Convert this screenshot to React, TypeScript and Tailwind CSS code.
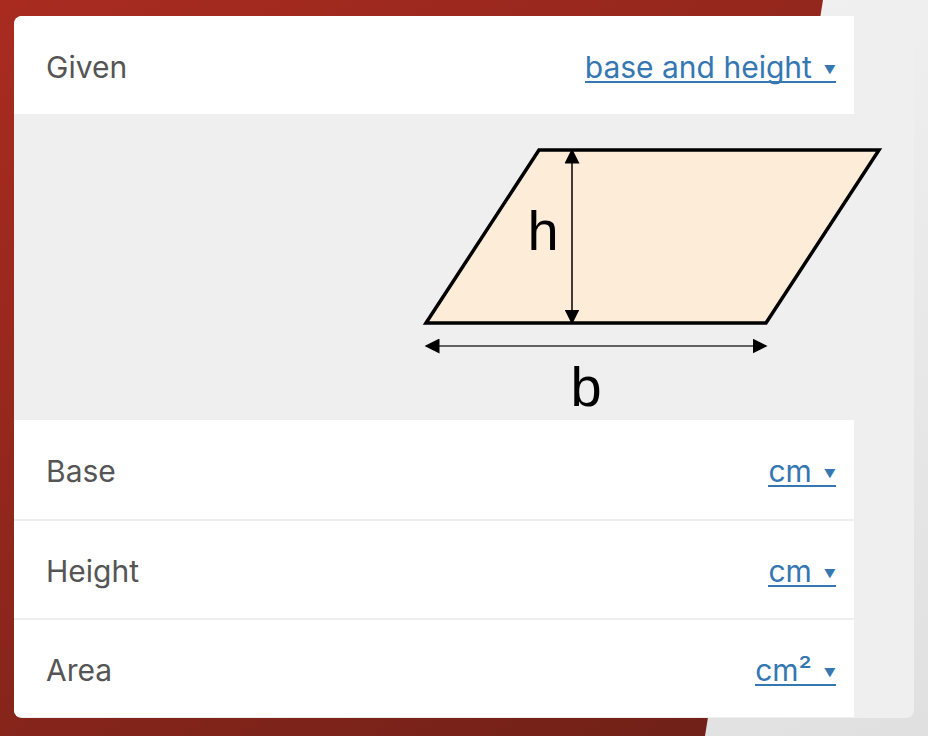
import React from "react";

const ROWS = [
  { label: "Base", unit: "cm" },
  { label: "Height", unit: "cm" },
  { label: "Area", unit: "cm²" },
];

function UnitLink({ children }: { children: React.ReactNode }) {
  // underline drawn as a background strip so it runs under the caret too
  return (
    <a
      href="#"
      className="bg-[linear-gradient(#3577b1,#3577b1)] bg-[length:100%_2px] bg-[position:0_calc(100%-7px)] bg-no-repeat text-[#3577b1] no-underline"
    >
      {children}
      <span className="ml-[12px] align-[4px] text-[12px]">▼</span>
    </a>
  );
}

function Parallelogram() {
  return (
    <svg width="900" height="306" viewBox="0 0 900 306" className="block">
      <defs>
        <marker id="ah" viewBox="0 0 10 10" refX="9" refY="5" markerWidth="15" markerHeight="15" markerUnits="userSpaceOnUse" orient="auto-start-reverse">
          <path d="M0 0 L10 5 L0 10 Z" fill="#000" />
        </marker>
      </defs>
      <polygon
        points="412,209 525,36 865,36 752,209"
        fill="#fdecd8"
        stroke="#000"
        strokeWidth="3.5"
        strokeLinejoin="miter"
      />
      <line x1="558" y1="36" x2="558" y2="209" stroke="#000" strokeWidth="1.5" markerStart="url(#ah)" markerEnd="url(#ah)" />
      <line x1="412" y1="232" x2="752" y2="232" stroke="#333" strokeWidth="1.5" markerStart="url(#ah)" markerEnd="url(#ah)" />
      <text x="529" y="136" textAnchor="middle" fontFamily="Liberation Sans, Arial, sans-serif" fontSize="56" fill="#000">h</text>
      <text x="572" y="292" textAnchor="middle" fontFamily="Liberation Sans, Arial, sans-serif" fontSize="56" fill="#000">b</text>
    </svg>
  );
}

export default function App() {
  return (
    <div
      className="relative h-[736px] w-[928px] overflow-hidden bg-[linear-gradient(160deg,#f6f6f6,#e0e0e0)]"
      style={{ fontFamily: "Inter, 'Liberation Sans', sans-serif" }}
    >
      <div className="absolute inset-0 bg-[linear-gradient(150deg,#a92b20_0%,#8f261c_45%,#6a2017_100%)] [clip-path:polygon(0_0,823px_0,705px_100%,0_100%)]" />
      <div className="relative ml-[14px] mt-[16px] h-[702px] w-[900px] overflow-hidden rounded-[8px] bg-[#efefef]">
        <div className="flex h-[98px] w-[840px] items-center justify-between bg-white pl-[32px] pr-[18px] pt-[4px] text-[30px]">
          <span className="text-[#555]">Given</span>
          <UnitLink>base and height</UnitLink>
        </div>
        <div className="h-[306px] bg-[#efefef]">
          <Parallelogram />
        </div>
        {ROWS.map((r, i) => (
          <div
            key={r.label}
            className={`flex h-[99px] w-[840px] items-center justify-between bg-white pl-[32px] pr-[18px] pt-[4px] text-[30px] ${i > 0 ? "border-t-2 border-[#eeeeee]" : ""}`}
          >
            <span className="text-[#555]">{r.label}</span>
            <UnitLink>{r.unit}</UnitLink>
          </div>
        ))}
      </div>
    </div>
  );
}
